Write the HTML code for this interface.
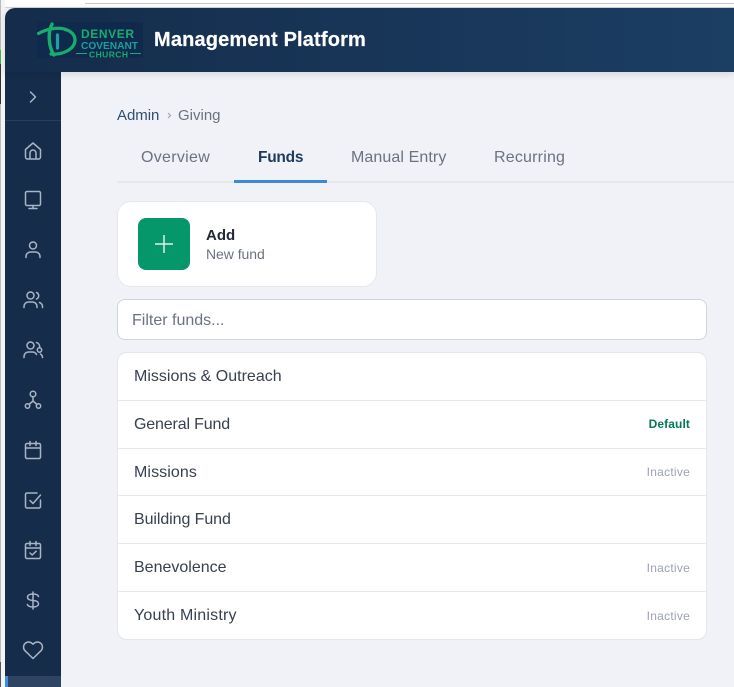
<!DOCTYPE html>
<html><head><meta charset="utf-8"><style>
*{box-sizing:border-box}
html,body{margin:0;padding:0}
body{width:734px;height:687px;overflow:hidden;position:relative;background:#f0f2f7;font-family:"Liberation Sans",sans-serif;color:#374151}
.a{position:absolute;white-space:nowrap}
.row{position:absolute;left:0;right:0;border-bottom:1px solid #e5e7eb}
.row .n{position:absolute;left:16px;top:50%;transform:translateY(-50%);margin-top:.5px;font-size:16px;letter-spacing:0;color:#374151}
.row .s{position:absolute;right:16px;top:50%;transform:translateY(-50%);font-size:12px;letter-spacing:.25px;color:#9ca3af}
.ic{position:absolute;left:21px;width:24px;height:24px;fill:none;stroke:#a9b5c5;stroke-width:1.5;stroke-linecap:round;stroke-linejoin:round}
</style></head><body>
<div class="a" style="left:0;top:0;width:734px;height:8px;background:#fff"></div>
<div class="a" style="left:85px;top:3px;width:649px;height:1px;background:#c9c9c9"></div>
<div class="a" style="left:0;top:7px;width:734px;height:1px;background:#d4d4d4"></div>
<div class="a" style="left:0;top:0;width:5px;height:687px;background:#f4f4f4"></div>
<div class="a" style="left:0;top:0;width:1px;height:687px;background:#bbb"></div>
<div class="a" style="left:0;top:50px;width:1px;height:14px;background:#4caf50"></div>
<div class="a" style="left:0;top:64px;width:1px;height:40px;background:#333"></div>
<div class="a" style="left:0;top:662px;width:1px;height:25px;background:#555"></div>

<!-- sidebar -->
<div class="a" style="left:5px;top:60px;width:56px;height:627px;background:#152c4a"></div>
<div class="a" style="left:5px;top:120px;width:56px;height:1px;background:#24405f"></div>
<div class="a" style="left:5px;top:676px;width:56px;height:11px;background:#2f4462"></div>
<div class="a" style="left:5px;top:676px;width:3px;height:11px;background:#3b8fdc"></div>

<!-- header -->
<div class="a" style="left:5px;top:8px;width:729px;height:64px;border-top-left-radius:10px;background:linear-gradient(90deg,#152c4b,#1b3e63);box-shadow:0 2px 8px rgba(0,0,0,.12)"></div>

<!-- logo -->
<svg class="a" style="left:37px;top:22px;width:106px;height:36px" viewBox="0 0 106 36">
<rect width="106" height="36" fill="#0f2a4d"/>
<g fill="none" stroke="#17ad6e" stroke-linecap="round">
<path d="M1.500 11.500C6 9 10 7.500 15 6.800C28 4.500 38 10 38 18C38 27 26 33 14 32" stroke-width="3.200"/>
<path d="M15 2C11 10 11 24 17 33" stroke-width="3.400"/>
<path d="M20.500 13V26" stroke="#1aa0a8" stroke-width="3.200"/>
</g>
<text x="44" y="16" font-family="Liberation Sans,sans-serif" font-size="12" font-weight="700" fill="#17ad6e" textLength="53">DENVER</text>
<text x="44" y="27" font-family="Liberation Sans,sans-serif" font-size="10.500" font-weight="700" fill="#1c9f9a" textLength="57" lengthAdjust="spacingAndGlyphs">COVENANT</text>
<text x="52" y="35.300" font-family="Liberation Sans,sans-serif" font-size="8.500" font-weight="700" fill="#17ad6e" textLength="39">CHURCH</text>
<path d="M39 31.500H50M93 31.500H104" stroke="#17ad6e" stroke-width="1"/>
</svg>
<div class="a" style="left:154px;top:27px;font-size:20px;line-height:27px;font-weight:700;color:#fff;letter-spacing:.16px;-webkit-text-stroke:.2px #fff">Management Platform</div>

<!-- sidebar icons -->
<svg class="ic" style="top:85px" viewBox="0 0 24 24"><path d="M9.500 7l5 5-5 5"/></svg>
<svg class="ic" style="top:139px" viewBox="0 0 24 24"><path d="M4.500 10.500L12 4l7.500 6.500V18a2 2 0 0 1-2 2h-11a2 2 0 0 1-2-2zM9 20v-6a3 3 0 0 1 6 0v6"/></svg>
<svg class="ic" style="top:188px" viewBox="0 0 24 24"><rect x="4.500" y="3.500" width="15" height="14" rx="1.500"/><path d="M12 17.500v2.500M8 20.500h8"/></svg>
<svg class="ic" style="top:238px" viewBox="0 0 24 24"><circle cx="12" cy="7.500" r="3.500"/><path d="M5 19.500v-1A4.500 4.500 0 0 1 9.500 14h5a4.500 4.500 0 0 1 4.500 4.500v1"/></svg>
<svg class="ic" style="top:288px" viewBox="0 0 24 24"><circle cx="9.500" cy="7.500" r="3.500"/><path d="M3 19.500v-1A4.500 4.500 0 0 1 7.500 14h4a4.500 4.500 0 0 1 4.500 4.500v1M15.500 4.500a3.500 3.500 0 0 1 0 6.500M21.500 19.500v-1a4.500 4.500 0 0 0-3-4"/></svg>
<svg class="ic" style="top:338px" viewBox="0 0 24 24"><circle cx="9.500" cy="7.500" r="3.500"/><path d="M3 19.500v-1A4.500 4.500 0 0 1 7.500 14h4c1.800 0 3.200 1 4 2.500M15.500 4.500c2 .5 3.500 2.500 3.200 5M21.500 19.500c0-1.500-.8-2.700-2-3.500"/><circle cx="18.500" cy="12" r="2.200"/></svg>
<svg class="ic" style="top:388px" viewBox="0 0 24 24"><circle cx="12" cy="6" r="2.800"/><circle cx="6.500" cy="18" r="2.200"/><circle cx="17.500" cy="18" r="2.200"/><path d="M12 9v4M12 13l-4 3.500M12 13l4 3.500"/></svg>
<svg class="ic" style="top:438px" viewBox="0 0 24 24"><rect x="4.500" y="5.500" width="15" height="15" rx="1.500"/><path d="M4.500 10h15M9 3.500v4M15 3.500v4"/></svg>
<svg class="ic" style="top:488px" viewBox="0 0 24 24"><path d="M19.500 12v6.500a1.500 1.500 0 0 1-1.500 1.500H6a1.500 1.500 0 0 1-1.500-1.500V6.500A1.500 1.500 0 0 1 6 5h10"/><path d="M9 12.500l3 3 7.500-8.500"/></svg>
<svg class="ic" style="top:538px" viewBox="0 0 24 24"><rect x="4.500" y="5.500" width="15" height="15" rx="1.500"/><path d="M4.500 10h15M9 3.500v4M15 3.500v4M9 15l2.200 2 4-3.800"/></svg>
<svg class="ic" style="top:588px" viewBox="0 0 24 24"><path d="M12 4v17M17.500 8.500C17 6.800 15 6 12 6c-3.300 0-5.500 1.300-5.500 3.300 0 2.200 2.200 3 5.500 3.200s5.500 1 5.500 3.300c0 2-2.200 3.200-5.500 3.200-3 0-5-.8-5.700-2.500"/></svg>
<svg class="ic" style="top:638px" viewBox="0 0 24 24"><path d="M12 20.500L4 12.700a5.200 5.200 0 0 1 0-7.200 5 5 0 0 1 7.200 0l.8.700.8-.7a5 5 0 0 1 7.200 0 5.200 5.200 0 0 1 0 7.200z"/></svg>

<!-- breadcrumb -->
<div class="a" style="left:117px;top:107px;font-size:15px;line-height:18px;color:#2c4f72;letter-spacing:-.05px">Admin</div>
<svg class="a" style="left:165px;top:110px;width:9px;height:11px" viewBox="0 0 9 11"><path d="M3 3l2.500 2.500L3 8" fill="none" stroke="#9ca3af" stroke-width="1.100"/></svg>
<div class="a" style="left:178px;top:107px;font-size:15px;line-height:18px;color:#6b7280;letter-spacing:0">Giving</div>

<!-- tabs -->
<div class="a" style="left:117px;top:181px;width:617px;height:2px;background:#e5e7eb"></div>
<div class="a" style="left:234px;top:180px;width:93px;height:3px;background:#3b8ad9"></div>
<div class="a" style="left:141px;top:148px;font-size:16px;line-height:19px;color:#6b7280;letter-spacing:.3px">Overview</div>
<div class="a" style="left:258px;top:148px;font-size:15.500px;line-height:19px;font-weight:700;color:#1e3a5f;letter-spacing:-.25px">Funds</div>
<div class="a" style="left:351px;top:148px;font-size:16px;line-height:19px;color:#6b7280;letter-spacing:.1px">Manual Entry</div>
<div class="a" style="left:494px;top:148px;font-size:16px;line-height:19px;color:#6b7280;letter-spacing:.2px">Recurring</div>

<!-- add card -->
<div class="a" style="left:117px;top:201px;width:260px;height:86px;background:#fff;border:1px solid #e5e7eb;border-radius:14px"></div>
<div class="a" style="left:138px;top:218px;width:52px;height:52px;background:#059669;border-radius:8px"></div>
<svg class="a" style="left:152px;top:232px;width:24px;height:24px" viewBox="0 0 24 24"><path d="M12 3v18M3 12h18" stroke="#d8f3e8" stroke-width="1.500" fill="none"/></svg>
<div class="a" style="left:206px;top:227px;font-size:15px;line-height:18px;font-weight:700;color:#1f2937;letter-spacing:0">Add</div>
<div class="a" style="left:206px;top:245px;font-size:14px;line-height:18px;color:#6b7280;letter-spacing:-.05px">New fund</div>

<!-- filter -->
<div class="a" style="left:117px;top:299px;width:590px;height:41px;background:#fff;border:1px solid #d1d5db;border-radius:8px"></div>
<div class="a" style="left:132px;top:312px;font-size:16px;line-height:18px;color:#6b7280;letter-spacing:0">Filter funds...</div>

<!-- list -->
<div class="a" style="left:117px;top:352px;width:590px;height:288px;background:#fff;border:1px solid #e5e7eb;border-radius:10px;overflow:hidden">
<div class="row" style="top:0;height:48px"><span class="n">Missions &amp; Outreach</span></div>
<div class="row" style="top:48px;height:48px"><span class="n" style="letter-spacing:-.15px">General Fund</span><span class="s" style="font-weight:700;color:#047857;letter-spacing:.1px;margin-top:-1px">Default</span></div>
<div class="row" style="top:96px;height:47px"><span class="n" style="letter-spacing:.1px">Missions</span><span class="s">Inactive</span></div>
<div class="row" style="top:143px;height:48px"><span class="n" style="letter-spacing:-.08px">Building Fund</span></div>
<div class="row" style="top:191px;height:48px"><span class="n">Benevolence</span><span class="s">Inactive</span></div>
<div class="row" style="top:239px;height:47px;border-bottom:0"><span class="n" style="letter-spacing:.2px">Youth Ministry</span><span class="s">Inactive</span></div>
</div>
</body></html>
